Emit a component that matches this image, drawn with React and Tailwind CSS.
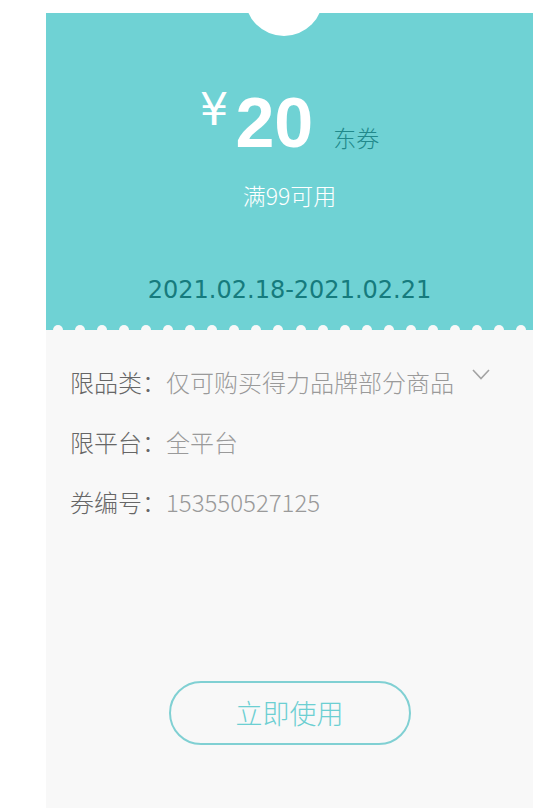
const bumps = Array.from({ length: 22 });

const rows = [
  { label: '限品类：', value: '仅可购买得力品牌部分商品', more: true },
  { label: '限平台：', value: '全平台' },
  { label: '券编号：', value: '153550527125' },
];

const cjk = { fontFamily: '"Noto Sans CJK SC", "Noto Sans", sans-serif' };

export default function App() {
  return (
    <div className="h-[808px] overflow-hidden bg-white pt-[13px] font-light" style={cjk}>
      <div className="ml-[46px] flex h-[795px] w-[487px] flex-col bg-[#f8f8f8]">
        {/* Top ticket */}
        <div className="relative flex h-[317px] flex-col items-center bg-[#6fd2d4]">
          {/* top notch */}
          <div className="absolute -top-[55px] left-[199px] h-[78px] w-[78px] rounded-full bg-white" />

          <div className="mt-[74px] h-[70px] whitespace-nowrap leading-[70px]">
            <span className="inline-block align-[22px] font-['DejaVu_Sans',sans-serif] text-[45px] font-normal leading-none text-white">¥</span>
            <span className="ml-[7px] font-['Liberation_Sans',Arial,sans-serif] text-[70px] font-bold text-white">20</span>
            <span className="ml-[20px] text-[23px] text-[#22898b]">东券</span>
          </div>

          <div className="mt-[23px] text-[23px] leading-[30px] text-white">满99可用</div>

          <div className="mt-[65px] font-['DejaVu_Sans',sans-serif] text-[24px] font-normal leading-[30px] text-[#167b7d]">
            2021.02.18-2021.02.21
          </div>

          {/* scalloped edge */}
          <div className="absolute -bottom-[5px] left-0 right-0 flex justify-between px-[7px]">
            {bumps.map((_, i) => (
              <div key={i} className="h-[10px] w-[10px] rounded-full bg-[#f8f8f8]" />
            ))}
          </div>
        </div>

        {/* Details */}
        <div className="flex flex-col px-[24px] pt-[22px]">
          {rows.map((r) => (
            <div key={r.label} className="flex h-[60px] items-center text-[24px] leading-[30px]">
              <span className="text-[#666666]">{r.label}</span>
              <span className="text-[#9a9a9a]">{r.value}</span>
              {r.more && (
                <svg className="mb-[16px] ml-[18px]" width="18" height="11" viewBox="0 0 18 11" fill="none">
                  <polyline points="1,1 9,9.5 17,1" stroke="#a3a3a3" strokeWidth="1.6" />
                </svg>
              )}
            </div>
          ))}
        </div>

        <button className="mx-auto mt-[149px] flex h-[64px] w-[242px] items-center justify-center rounded-full border-2 border-[#80d0d3] text-[27px] text-[#6ccfd2]">
          立即使用
        </button>
      </div>
    </div>
  );
}
